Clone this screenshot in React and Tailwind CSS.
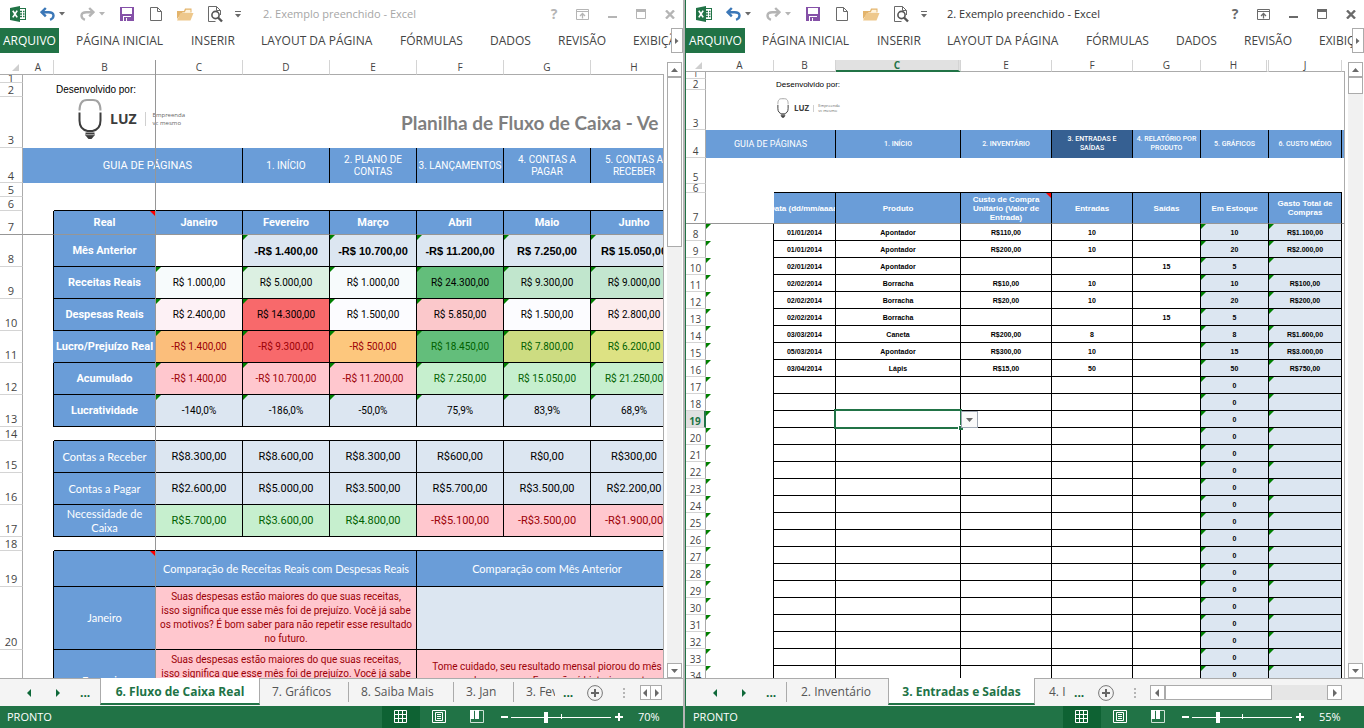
import React from "react";

const UI = "font-['Open_Sans','Noto_Sans',sans-serif]";
const BLUE = "bg-[#6a9dd8] text-white";
const ICE = "bg-[#dce6f1] text-black";
const PINK = "bg-[#ffc7ce] text-[#9c0006]";
const MINT = "bg-[#c6efce] text-[#006100]";

/* ---------- icons ---------- */

function ExcelIcon() {
  return (
    <svg width="17" height="16" viewBox="0 0 17 16" className="shrink-0" aria-hidden="true">
      <rect x="8.5" y="2.5" width="7" height="11" fill="#fff" stroke="#217346" />
      <path d="M10 5.5h2M13 5.5h1.5M10 8h2M13 8h1.5M10 10.5h2M13 10.5h1.5" stroke="#217346" strokeWidth="1.4" />
      <path d="M0 2l10-2v16l-10-2z" fill="#217346" />
      <path d="M2.8 4.8l4.4 6.6M7.2 4.6l-4.4 6.8" stroke="#fff" strokeWidth="1.7" />
    </svg>
  );
}

function UndoIcon({ flip }) {
  return (
    <svg width="15" height="14" viewBox="0 0 15 14" className={flip ? "shrink-0 -scale-x-100 text-[#b5b5b5]" : "shrink-0 text-[#3c78b8]"} aria-hidden="true">
      <path d="M1.5 5.2h7.2c6 0 6.200 5.600 1.400 7.600" fill="none" stroke="currentColor" strokeWidth="2.4" />
      <path d="M5.800 1L1.600 5.200l4.200 4.200" fill="none" stroke="currentColor" strokeWidth="2.4" />
    </svg>
  );
}

function Caret({ className }) {
  return (
    <svg width="6" height="4" viewBox="0 0 6 4" className={className} aria-hidden="true">
      <path d="M0 0h6l-3 3.4z" fill="currentColor" />
    </svg>
  );
}

function SaveIcon() {
  return (
    <svg width="14" height="14" viewBox="0 0 14 14" aria-hidden="true">
      <path d="M0 0h14v14h-14z" fill="#8551a8" />
      <path d="M2 1h10v6h-10zM3 9h8v5h-8z" fill="#fff" />
      <path d="M4 10h7v4h-4v-3h-1v3h-2z" fill="#8551a8" />
    </svg>
  );
}

function NewIcon() {
  return (
    <svg width="12" height="14" viewBox="0 0 12 14" aria-hidden="true">
      <path d="M.5.5h7l4 4v9h-11zM7.5.5v4h4" fill="#fff" stroke="#6a6a6a" />
    </svg>
  );
}

function OpenIcon() {
  return (
    <svg width="17" height="13" viewBox="0 0 17 13" aria-hidden="true">
      <path d="M0 11V3h7l1-2.500h6.500v4h-9z" fill="#e3b46c" />
      <path d="M9 1.700h4.500v3h-6z" fill="#fff3dc" />
      <path d="M0 12.500l3.500-7.500h13l-3 7.500z" fill="#eec88c" />
    </svg>
  );
}

function PreviewIcon() {
  return (
    <svg width="15" height="17" viewBox="0 0 15 17" aria-hidden="true">
      <path d="M12.500 9V4.500l-4-4h-8v15h7" fill="none" stroke="#6a6a6a" />
      <path d="M8.500.5v4h4" fill="none" stroke="#6a6a6a" />
      <circle cx="7.500" cy="9" r="3.600" fill="#fff" stroke="#555" strokeWidth="1.600" />
      <path d="M10 11.500l4 4" stroke="#555" strokeWidth="2.400" />
    </svg>
  );
}

function CustomizeIcon() {
  return (
    <svg width="6" height="7" viewBox="0 0 6 7" aria-hidden="true">
      <path d="M0 .5h6" stroke="#6a6a6a" />
      <path d="M0 3h6l-3 3.400z" fill="#6a6a6a" />
    </svg>
  );
}

function WindowIcons() {
  return (
    <>
      <button aria-label="Opções de exibição" className="w-[14px]">
        <svg width="14" height="11" viewBox="0 0 14 11" aria-hidden="true">
          <path d="M.5.5h12v10h-12zM.5 2.500h12" fill="none" stroke="currentColor" />
          <path d="M6.500 9.500v-5M4 7l2.500-2.500L9 7" fill="none" stroke="currentColor" strokeWidth="1.300" />
        </svg>
      </button>
      <button aria-label="Minimizar" className="w-[10px]">
        <svg width="10" height="11" viewBox="0 0 10 11" aria-hidden="true"><path d="M0 8h9" stroke="currentColor" strokeWidth="2" /></svg>
      </button>
      <button aria-label="Maximizar" className="w-[11px]">
        <svg width="11" height="10" viewBox="0 0 11 10" aria-hidden="true">
          <path d="M.5.5h9v9h-9z" fill="none" stroke="currentColor" /><path d="M0 1.500h10" stroke="currentColor" strokeWidth="3" />
        </svg>
      </button>
      <button aria-label="Fechar" className="w-[10px]">
        <svg width="10" height="9" viewBox="0 0 10 9" aria-hidden="true"><path d="M1 0.500l8 8M9 0.500l-8 8" stroke="currentColor" strokeWidth="2.400" /></svg>
      </button>
    </>
  );
}

function Bulb({ className }) {
  return (
    <svg viewBox="0 0 24 41" className={className} aria-hidden="true">
      <path d="M1.500 12C1.500 4 4.500 1.500 9 1.500h6c4.500 0 7.500 2.500 7.500 10.500" fill="none" stroke="#a3a3a3" strokeWidth="2" />
      <path d="M1.500 14v8c0 6 3.500 9.500 8 10.500h5c4.500-1 8-4.500 8-10.500v-8" fill="none" stroke="#3c3c3c" strokeWidth="2" />
      <path d="M7.500 34h9v3l-3 3.500h-3l-3-3.500z" fill="#3c3c3c" />
      <path d="M8 36.200h8" stroke="#fff" strokeWidth=".6" />
    </svg>
  );
}

/* ---------- window chrome ---------- */

const MENU = [
  ["PÁGINA INICIAL", "w-[115px]"],
  ["INSERIR", "w-[70px]"],
  ["LAYOUT DA PÁGINA", "w-[139px]"],
  ["FÓRMULAS", "w-[90px]"],
  ["DADOS", "w-[68px]"],
  ["REVISÃO", "w-[75px]"],
];

function TitleBar({ active }) {
  return (
    <header className={`flex h-7 shrink-0 items-center pl-[10px] ${UI}`}>
      <ExcelIcon />
      <button aria-label="Desfazer" className="ml-[13px]"><UndoIcon /></button>
      <Caret className="ml-1 shrink-0 text-[#6a6a6a]" />
      <button aria-label="Refazer" className="ml-[15px]"><UndoIcon flip /></button>
      <Caret className="ml-1 shrink-0 text-[#b5b5b5]" />
      <button aria-label="Salvar" className="ml-[15px]"><SaveIcon /></button>
      <button aria-label="Novo" className="ml-4"><NewIcon /></button>
      <button aria-label="Abrir" className="ml-[15px]"><OpenIcon /></button>
      <button aria-label="Visualizar impressão" className="ml-[14px]"><PreviewIcon /></button>
      <button aria-label="Personalizar" className="ml-3"><CustomizeIcon /></button>
      <h1 className={`flex-1 truncate text-[11px] leading-4 ${active ? "ml-5 text-[#333]" : "ml-[22px] text-[#a6a6a6]"}`}>2. Exemplo preenchido - Excel</h1>
      <div className={`flex shrink-0 items-center gap-[18px] pr-2 ${active ? "text-[#6a6a6a]" : "text-[#b5b5b5]"}`}>
        <button aria-label="Ajuda" className="w-[8px] text-[14px] leading-4 font-bold">?</button>
        <WindowIcons />
      </div>
    </header>
  );
}

function Ribbon() {
  return (
    <nav className={`mb-[7px] flex h-[25px] shrink-0 overflow-hidden text-[12px] leading-4 text-[#444] ${UI}`}>
      <button className="mr-[17px] w-[59px] shrink-0 bg-[#217346] text-white">ARQUIVO</button>
      {MENU.map(([label, width]) => (
        <button key={label} className={`shrink-0 text-left whitespace-nowrap ${width}`}>{label}</button>
      ))}
      <button className="min-w-0 flex-1 overflow-hidden text-left whitespace-nowrap">EXIBIÇÃO</button>
      <button aria-label="Mais guias" className="flex w-3 shrink-0 items-center justify-center border border-[#ababab]">
        <svg width="4" height="6" viewBox="0 0 4 6" aria-hidden="true"><path d="M0 0l3.500 3L0 6z" fill="#6a6a6a" /></svg>
      </button>
    </nav>
  );
}

function ArrowBox({ d, label, className }) {
  return (
    <button aria-label={label} className={`flex h-[15px] shrink-0 items-center justify-center border border-[#ababab] bg-white ${className}`}>
      <svg width="7" height="8" viewBox="0 0 7 8" aria-hidden="true"><path d={d} fill="#6a6a6a" /></svg>
    </button>
  );
}

function VScroll({ thumb }) {
  return (
    <div className="mr-px ml-[3px] flex w-[15px] shrink-0 flex-col bg-[#f1f1f1]">
      <div className="h-[2px] bg-white" />
      <ArrowBox d="M0 6h7L3.500 2z" label="Rolar para cima" className="w-[15px]" />
      <div className={`border border-[#ababab] bg-white ${thumb}`} />
      <div className="flex-1" />
      <ArrowBox d="M0 2h7L3.500 6z" label="Rolar para baixo" className="w-[15px]" />
    </div>
  );
}

function SheetNav({ className }) {
  return (
    <div className={`flex shrink-0 items-center pl-[27px] text-[#0e6839] ${className}`}>
      <button aria-label="Planilha anterior"><svg width="4" height="8" viewBox="0 0 4 8" aria-hidden="true"><path d="M4 0v8l-4-4z" fill="currentColor" /></svg></button>
      <button aria-label="Próxima planilha" className="ml-[25px]"><svg width="4" height="8" viewBox="0 0 4 8" aria-hidden="true"><path d="M0 0v8l4-4z" fill="currentColor" /></svg></button>
      <button aria-label="Mais planilhas" className="ml-5 font-bold">...</button>
    </div>
  );
}

function SheetTab({ label, className }) {
  return <button className={`my-[3px] h-5 shrink-0 overflow-hidden text-left whitespace-nowrap ${className}`}>{label}</button>;
}

function TabTail() {
  return (
    <>
      <span className="ml-2 shrink-0 self-center font-bold text-[#0e6839]">...</span>
      <button aria-label="Nova planilha" className="ml-[14px] shrink-0 self-center">
        <svg width="16" height="16" viewBox="0 0 16 16" aria-hidden="true">
          <circle cx="8" cy="8" r="7.400" fill="none" stroke="#777" />
          <path d="M8 4v8M4 8h8" stroke="#666" strokeWidth="2" />
        </svg>
      </button>
      <svg width="2" height="10" viewBox="0 0 2 10" className="ml-5 shrink-0 self-center" aria-hidden="true">
        <path d="M0 1h2M0 5h2M0 9h2" stroke="#b5b5b5" strokeWidth="2" />
      </svg>
    </>
  );
}

function StatusBar({ zoom, value }) {
  return (
    <footer className={`flex h-[22px] shrink-0 items-center bg-[#217346] pl-[7px] text-[11px] leading-4 text-white ${UI}`}>
      <span className="flex-1">PRONTO</span>
      <button aria-label="Normal" className="flex h-full w-[38px] items-center justify-center bg-[#0e6233]">
        <svg width="14" height="14" viewBox="0 0 14 14" aria-hidden="true"><path d="M.5.5h12v12h-12zM4.500.5v12M8.500.5v12M.5 4.500h12M.5 8.500h12" fill="none" stroke="#fff" /></svg>
      </button>
      <button aria-label="Layout da página" className="flex h-full w-[38px] items-center justify-center">
        <svg width="14" height="14" viewBox="0 0 14 14" aria-hidden="true"><path d="M.5.5h13v12h-13zM3.500 2.500h7v8h-7zM5 4.500h4M5 6.500h4M5 8.500h4" fill="none" stroke="#fff" /></svg>
      </button>
      <button aria-label="Quebra de página" className="flex h-full w-[38px] items-center justify-center">
        <svg width="14" height="14" viewBox="0 0 14 14" aria-hidden="true"><path d="M.5.5h13v12h-13z" fill="none" stroke="#cfe3d7" /><path d="M0 0h4v9H0zM5 0h4v9H5z" fill="#fff" /></svg>
      </button>
      <button aria-label="Reduzir" className="ml-[5px] flex h-full w-[7px] items-center"><span className="h-[2px] w-full bg-white" /></button>
      <label className="relative ml-[3px] flex h-full w-[100px] items-center">
        <span className="sr-only">Zoom</span>
        <span className="absolute top-2 left-1/2 h-[5px] w-px bg-white" />
        <input
          type="range"
          defaultValue={value}
          className="relative h-[11px] w-full appearance-none bg-transparent [&::-webkit-slider-runnable-track]:h-px [&::-webkit-slider-runnable-track]:bg-white [&::-webkit-slider-thumb]:-mt-[5px] [&::-webkit-slider-thumb]:h-[11px] [&::-webkit-slider-thumb]:w-[4px] [&::-webkit-slider-thumb]:appearance-none [&::-webkit-slider-thumb]:bg-white"
        />
      </label>
      <button aria-label="Ampliar" className="ml-1">
        <svg width="8" height="8" viewBox="0 0 8 8" aria-hidden="true"><path d="M4 0v8M0 4h8" stroke="#fff" strokeWidth="2" /></svg>
      </button>
      <span className="ml-[15px] w-[45px]">{zoom}</span>
    </footer>
  );
}

/* ---------- sheet parts ---------- */

function Flag() {
  return <span className="absolute top-0 left-0 size-[5px] bg-[#008000] [clip-path:polygon(0_0,100%_0,0_100%)]" />;
}

function Note() {
  return <span className="absolute top-0 right-0 size-[5px] bg-[#ff0000] [clip-path:polygon(0_0,100%_0,100%_100%)]" />;
}

function Cell({ children, flag, note, span, className = "" }) {
  return (
    <td colSpan={span} className={`relative border-r border-b border-black p-0 text-center ${className}`}>
      {flag && <Flag />}
      {note && <Note />}
      {children}
    </td>
  );
}

function RowHead({ n, height, inner = "", className = "border-r border-b border-r-[#ababab] border-b-[#d4d4d4] font-normal text-[#444]" }) {
  return (
    <th scope="row" className={`p-0 text-center align-bottom ${height} ${className} ${UI}`}>
      <div className={`overflow-hidden ${inner}`}>{n}</div>
    </th>
  );
}

function Corner() {
  return (
    <th className="border-b border-[#ababab] p-0 pr-1">
      <svg width="7" height="7" viewBox="0 0 7 7" className="ml-auto" aria-hidden="true"><path d="M7 0v7H0z" fill="#cfcfcf" /></svg>
    </th>
  );
}

/* ---------- left workbook ---------- */

const MONTHS = ["Janeiro", "Fevereiro", "Março", "Abril", "Maio", "Junho"];
const WHITE = "bg-[#fcfcff] text-black";

const REAL_ROWS = [
  { n: 9, label: "Receitas Reais", cells: [
    ["R$ 1.000,00", "bg-[#f7fbfc]"], ["R$ 5.000,00", "bg-[#dcf0e2]"], ["R$ 1.000,00", "bg-[#f7fbfc]"],
    ["R$ 24.300,00", "bg-[#63be7b]"], ["R$ 9.300,00", "bg-[#c1e6cd]"], ["R$ 9.000,00", "bg-[#c3e6cf]"]] },
  { n: 10, label: "Despesas Reais", cells: [
    ["R$ 2.400,00", "bg-[#fdf1f5]"], ["R$ 14.300,00", "bg-[#f8696b]"], ["R$ 1.500,00", WHITE],
    ["R$ 5.850,00", "bg-[#fbc8cb]"], ["R$ 1.500,00", WHITE], ["R$ 2.800,00", "bg-[#fceced]"]] },
  { n: 11, label: "Lucro/Prejuízo Real", cells: [
    ["-R$ 1.400,00", "bg-[#fbbe7b] text-[#9c0006]"], ["-R$ 9.300,00", "bg-[#f8696b] text-[#9c0006]"], ["-R$ 500,00", "bg-[#fdc77d] text-[#9c0006]"],
    ["R$ 18.450,00", "bg-[#63be7b] text-[#006100]"], ["R$ 7.800,00", "bg-[#cddc81] text-[#006100]"], ["R$ 6.200,00", "bg-[#dde283] text-[#006100]"]] },
  { n: 12, label: "Acumulado", cells: [
    ["-R$ 1.400,00", PINK], ["-R$ 10.700,00", PINK], ["-R$ 11.200,00", PINK],
    ["R$ 7.250,00", MINT], ["R$ 15.050,00", MINT], ["R$ 21.250,00", MINT]] },
  { n: 13, label: "Lucratividade", cells: [
    ["-140,0%", ICE], ["-186,0%", ICE], ["-50,0%", ICE], ["75,9%", ICE], ["83,9%", ICE], ["68,9%", ICE]] },
];

const BILL_ROWS = [
  { n: 15, label: "Contas a Receber", cells: [["R$8.300,00", ICE], ["R$8.600,00", ICE], ["R$8.300,00", ICE], ["R$600,00", ICE], ["R$0,00", ICE], ["R$300,00", ICE]] },
  { n: 16, label: "Contas a Pagar", cells: [["R$2.600,00", ICE], ["R$5.000,00", ICE], ["R$3.500,00", ICE], ["R$5.700,00", ICE], ["R$3.500,00", ICE], ["R$2.200,00", ICE]] },
  { n: 17, label: "Necessidade de Caixa", cells: [["R$5.700,00", MINT], ["R$3.600,00", MINT], ["R$4.800,00", MINT], ["-R$5.100,00", PINK], ["-R$3.500,00", PINK], ["-R$1.900,00", PINK]] },
];

const PROSE = "font-['Lato',sans-serif]";
const ADVICE = `font-['Roboto',sans-serif] text-[10px] whitespace-nowrap ${PINK}`;

function LossText() {
  return (
    <>
      Suas despesas estão maiores do que suas receitas,<br />
      isso significa que esse mês foi de prejuízo. Você já sabe<br />
      os motivos? É bom saber para não repetir esse resultado<br />
      no futuro.
    </>
  );
}

function CashFlowSheet() {
  return (
    <div className="relative min-w-0 flex-1 overflow-hidden font-['Roboto',sans-serif]">
      <table className="w-[678px] table-fixed border-separate border-spacing-0 text-[11px] leading-[14px]">
        <colgroup>
          <col className="w-[23px]" /><col className="w-[31px]" /><col className="w-[102px]" />
          {MONTHS.map((m) => <col key={m} className="w-[87px]" />)}
        </colgroup>
        <thead>
          <tr className="h-[15px]">
            <Corner />
            {["A", "B", "C", "D", "E", "F", "G", "H"].map((c) => (
              <th key={c} scope="col" className={`border-r border-b border-r-[#d4d4d4] border-b-[#ababab] p-0 text-[10px] font-normal text-[#444] ${UI}`}>{c}</th>
            ))}
          </tr>
        </thead>
        <tbody>
          <tr><RowHead n={1} height="h-[8px]" inner="flex h-[7px] items-end justify-center leading-[9px]" /><td colSpan={8} /></tr>
          <tr>
            <RowHead n={2} height="h-[14px]" inner="leading-[12px]" />
            <td />
            <td colSpan={2} className="p-0 pl-[2px] font-['Liberation_Sans',Arial,sans-serif] text-[10px] leading-[12px]">Desenvolvido por:</td>
            <td colSpan={5} />
          </tr>
          <tr>
            <RowHead n={3} height="h-[51px]" />
            <td colSpan={8} className="p-0 pl-[378px] font-['Lato',sans-serif] text-[19px] leading-6 font-bold whitespace-nowrap text-[#7f7f7f]">
              Planilha de Fluxo de Caixa - Ve
            </td>
          </tr>
          <tr className="leading-[12px]">
            <RowHead n={4} height="h-[35px]" />
            <td colSpan={3} className={`border-r border-black p-0 pl-[30px] text-center ${BLUE}`}>GUIA DE PÁGINAS</td>
            {["1. INÍCIO", "2. PLANO DE CONTAS", "3. LANÇAMENTOS", "4. CONTAS A PAGAR", "5. CONTAS A RECEBER"].map((t) => (
              <td key={t} className={`border-r border-black p-0 px-px text-center text-[10px] ${BLUE}`}>{t}</td>
            ))}
          </tr>
          <tr><RowHead n={5} height="h-[14px]" inner="leading-[12px]" /><td colSpan={8} /></tr>
          <tr><RowHead n={6} height="h-[14px]" inner="leading-[12px]" /><td /><td colSpan={7} className="border-b border-black" /></tr>
          <tr className="font-bold">
            <RowHead n={7} height="h-[24px]" className="border-r border-b border-r-[#ababab] border-b-[#969696] font-normal text-[#444]" />
            <td className="border-r border-b border-r-black border-b-[#969696]" />
            <Cell note className={`border-b-[#969696] ${BLUE}`}>Real</Cell>
            {MONTHS.map((m) => <Cell key={m} className={`border-b-[#969696] ${BLUE}`}>{m}</Cell>)}
          </tr>
          <tr className="font-bold">
            <RowHead n={8} height="h-[32px]" />
            <td className="border-r border-black" />
            <Cell className={BLUE}>Mês Anterior</Cell>
            <Cell />
            {["-R$ 1.400,00", "-R$ 10.700,00", "-R$ 11.200,00", "R$ 7.250,00", "R$ 15.050,00"].map((v) => (
              <Cell key={v} flag className={`font-['Liberation_Sans',Arial,sans-serif] ${ICE}`}>{v}</Cell>
            ))}
          </tr>
          {REAL_ROWS.map((r) => (
            <tr key={r.n}>
              <RowHead n={r.n} height="h-[32px]" />
              <td className={`border-r ${r.n === 11 ? "border-[#6a9dd8]" : "border-black"}`} />
              <Cell className={`font-bold whitespace-nowrap ${BLUE}`}>{r.label}</Cell>
              {r.cells.map(([v, c], i) => <Cell key={i} flag className={`text-[10px] ${c}`}>{v}</Cell>)}
            </tr>
          ))}
          <tr><RowHead n={14} height="h-[14px]" inner="leading-[12px]" /><td /><td colSpan={7} className="border-b border-black" /></tr>
          {BILL_ROWS.map((r) => (
            <tr key={r.n}>
              <RowHead n={r.n} height="h-[32px]" />
              <td className="border-r border-black" />
              <Cell className={`${PROSE} ${BLUE}`}>{r.label}</Cell>
              {r.cells.map(([v, c], i) => <Cell key={i} className={c}>{v}</Cell>)}
            </tr>
          ))}
          <tr><RowHead n={18} height="h-[14px]" inner="leading-[12px]" /><td /><td colSpan={7} className="border-b border-black" /></tr>
          <tr className={PROSE}>
            <RowHead n={19} height="h-[36px]" />
            <td className="border-r border-black" />
            <Cell note className={BLUE} />
            <Cell span={3} className={BLUE}>Comparação de Receitas Reais com Despesas Reais</Cell>
            <Cell span={3} className={BLUE}>Comparação com Mês Anterior</Cell>
          </tr>
          <tr className={PROSE}>
            <RowHead n={20} height="h-[63px]" />
            <td className="border-r border-black" />
            <Cell className={BLUE}>Janeiro</Cell>
            <Cell span={3} className={ADVICE}><LossText /></Cell>
            <Cell span={3} className={ICE} />
          </tr>
          <tr className={PROSE}>
            <RowHead n={21} height="h-[63px]" />
            <td className="border-r border-black" />
            <Cell className={BLUE}>Fevereiro</Cell>
            <Cell span={3} className={ADVICE}><LossText /></Cell>
            <Cell span={3} className={ADVICE}>
              Tome cuidado, seu resultado mensal piorou do mês<br />
              passado para esse. Essa não é historicamente<br />
              uma tendência positiva.
            </Cell>
          </tr>
        </tbody>
      </table>
      <div className="absolute top-[38px] left-[78px] flex items-center">
        <Bulb className="h-[42px] w-[24px]" />
        <span className={`ml-2 text-[14px] leading-5 font-bold text-[#3c3c3c] ${UI}`}>LUZ</span>
        <span className="ml-2 h-[14px] w-px bg-[#d0d0d0]" />
        <span className={`ml-[7px] text-[6px] leading-[8px] font-medium text-[#666] ${UI}`}>Empreenda<br />vc mesmo</span>
      </div>
      <div className="absolute top-0 bottom-0 left-[155px] w-px bg-[#969696]" />
      <div className="absolute top-[14px] right-0 bottom-0 w-px bg-[#ababab]" />
    </div>
  );
}

/* ---------- right workbook ---------- */

const STOCK = [
  ["01/01/2014", "Apontador", "R$110,00", "10", "", "10", "R$1.100,00"],
  ["01/01/2014", "Apontador", "R$200,00", "10", "", "20", "R$2.000,00"],
  ["02/01/2014", "Apontador", "", "", "15", "5", ""],
  ["02/02/2014", "Borracha", "R$10,00", "10", "", "10", "R$100,00"],
  ["02/02/2014", "Borracha", "R$20,00", "10", "", "20", "R$200,00"],
  ["02/02/2014", "Borracha", "", "", "15", "5", ""],
  ["03/03/2014", "Caneta", "R$200,00", "8", "", "8", "R$1.600,00"],
  ["05/03/2014", "Apontador", "R$300,00", "10", "", "15", "R$3.000,00"],
  ["03/04/2014", "Lápis", "R$15,00", "50", "", "50", "R$750,00"],
  ...Array.from({ length: 18 }, () => ["", "", "", "", "", "0", ""]),
];

const STOCK_NAV = ["1. INÍCIO", "2. INVENTÁRIO", "3. ENTRADAS E SAÍDAS", "4. RELATÓRIO POR PRODUTO", "5. GRÁFICOS", "6. CUSTO MÉDIO"];
const STOCK_HEAD = ["Produto", "Custo de Compra Unitário (Valor de Entrada)", "Entradas", "Saídas", "Em Estoque", "Gasto Total de Compras"];
const HEAD_ON = "border-r-2 border-b border-r-[#217346] border-b-[#d4d4d4] bg-[#e1e1e1] font-bold text-[#217346]";

function Selection() {
  return (
    <>
      <span className="absolute -top-[2px] -right-[2px] -bottom-[2px] -left-[2px] z-10 border-2 border-[#217346]" />
      <span className="absolute -right-[3px] -bottom-[3px] z-10 size-[5px] border-t border-l border-white bg-[#217346]" />
      <button aria-label="Abrir lista" className="absolute top-0 left-full z-20 ml-px flex h-[17px] w-[17px] items-center justify-center border border-[#a0a8b4] bg-[#fafafa]">
        <svg width="7" height="4" viewBox="0 0 7 4" aria-hidden="true"><path d="M0 0h7L3.500 4z" fill="#6a6a6a" /></svg>
      </button>
    </>
  );
}

function StockSheet() {
  return (
    <div className="relative min-w-0 flex-1 overflow-hidden font-['Liberation_Sans',Arial,sans-serif]">
      <table className="w-[696px] table-fixed border-separate border-spacing-0 text-[10px] leading-[12px]">
        <colgroup>
          <col className="w-[20px]" /><col className="w-[68px]" /><col className="w-[62px]" /><col className="w-[125px]" /><col className="w-[91px]" />
          <col className="w-[81px]" /><col className="w-[68px]" /><col className="w-[68px]" /><col className="w-[73px]" /><col className="w-[40px]" />
        </colgroup>
        <thead>
          <tr className="h-[12px] leading-[9px]">
            <Corner />
            {["A", "B", "C", "E", "F", "G", "H", "J", ""].map((c, i) => (
              <th
                key={i}
                scope="col"
                className={`p-0 text-[10px] ${UI} ${
                  c === "C"
                    ? "border-r-[3px] border-b-2 border-double border-r-[#d4d4d4] border-b-[#217346] bg-[#e1e1e1] font-bold text-[#217346] [border-bottom-style:solid]"
                    : c === "H"
                      ? "border-r-[3px] border-b border-double border-r-[#d4d4d4] border-b-[#ababab] font-normal text-[#444] [border-bottom-style:solid]"
                      : "border-r border-b border-r-[#d4d4d4] border-b-[#ababab] font-normal text-[#444]"
                }`}
              >
                {c}
              </th>
            ))}
          </tr>
        </thead>
        <tbody>
          <tr><RowHead n={1} height="h-[7px]" inner="flex h-[6px] items-end justify-center text-[9px] leading-[8px]" /><td colSpan={9} /></tr>
          <tr>
            <RowHead n={2} height="h-[11px]" inner="h-[10px] leading-[10px]" />
            <td />
            <td colSpan={2} className="p-0 pl-[2px] text-[8px] leading-[10px]">Desenvolvido por:</td>
            <td colSpan={6} />
          </tr>
          <tr><RowHead n={3} height="h-[40px]" inner="leading-[11px]" /><td colSpan={9} /></tr>
          <tr className="font-['Roboto',sans-serif] text-[7px] leading-[9px] font-medium">
            <RowHead n={4} height="h-[28px]" inner="text-[10px] leading-[11px]" />
            <td colSpan={2} className={`border-r border-black p-0 text-center text-[9px] font-normal ${BLUE}`}>GUIA DE PÁGINAS</td>
            {STOCK_NAV.map((t) => (
              <td key={t} className={`border-r border-black p-0 text-center text-white ${t.startsWith("3") ? "bg-[#366092] px-2" : "bg-[#6a9dd8]"}`}>{t}</td>
            ))}
            <td className="bg-[#6a9dd8]" />
          </tr>
          <tr><RowHead n={5} height="h-[26px]" inner="leading-[11px]" /><td colSpan={9} /></tr>
          <tr><RowHead n={6} height="h-[9px]" inner="h-[8px] leading-[9px]" /><td /><td colSpan={7} className="border-b border-black" /><td /></tr>
          <tr className="text-[8px] leading-[9px] font-bold">
            <RowHead n={7} height="h-[31px]" inner="text-[10px] leading-[11px]" className="border-r border-b border-r-[#ababab] border-b-[#969696] font-normal text-[#444]" />
            <td className="border-b border-[#969696]" />
            <Cell className={`border-b-[#969696] ${BLUE}`}>
              <div className="flex justify-center overflow-hidden whitespace-nowrap"><span className="shrink-0">Data (dd/mm/aaaa)</span></div>
            </Cell>
            {STOCK_HEAD.map((t, i) => <Cell key={t} note={i === 1} className={`border-b-[#969696] ${BLUE}`}>{t}</Cell>)}
            <td className="border-b border-[#969696]" />
          </tr>
          {STOCK.map((row, i) => {
            const n = i + 8;
            return (
              <tr key={n} className="text-[7px] leading-[10px] font-bold">
                <RowHead n={n} height="h-[17px]" inner="text-[10px] leading-[12px]" className={n === 19 ? HEAD_ON : undefined} />
                <td className="relative border-r border-black p-0"><Flag /></td>
                {row.map((v, c) => (
                  <Cell key={c} flag={c > 4} className={`pt-px ${c > 4 ? ICE : ""}`}>
                    {n === 19 && c === 1 ? <Selection /> : v}
                  </Cell>
                ))}
                <td />
              </tr>
            );
          })}
        </tbody>
      </table>
      <div className="absolute top-[38px] left-[90px] flex items-center">
        <Bulb className="h-[20px] w-[14px]" />
        <span className={`ml-1 text-[8px] leading-3 font-bold text-[#3c3c3c] ${UI}`}>LUZ</span>
        <span className="ml-1 h-[7px] w-px bg-[#d0d0d0]" />
        <span className={`ml-1 text-[4px] leading-[5px] text-[#666] ${UI}`}>Empreenda<br />vc mesmo</span>
      </div>
      <div className="absolute top-[11px] right-0 bottom-0 w-px bg-[#ababab]" />
    </div>
  );
}

/* ---------- page ---------- */

const TABBAR = `flex h-[28px] shrink-0 border-t border-[#ababab] bg-[#f4f4f4] text-[12px] leading-5 text-[#555] ${UI}`;
const TAB_ON = "-mt-px h-[27px] shrink-0 border-x border-b-2 border-x-[#ababab] border-b-[#217346] bg-white pt-[2px] text-center font-bold whitespace-nowrap text-[#217346]";

export default function App() {
  return (
    <main className="grid h-screen grid-cols-[685fr_679fr] grid-rows-[100%] overflow-hidden bg-white">
      <section className="flex min-h-0 min-w-0 flex-col border-r-2 border-[#b4b4b4]">
        <TitleBar />
        <Ribbon />
        <div className="flex min-h-0 flex-1 overflow-hidden">
          <CashFlowSheet />
          <VScroll thumb="h-[170px]" />
        </div>
        <div className={TABBAR}>
          <SheetNav className="w-[100px]" />
          <button className={`w-[160px] ${TAB_ON}`}>6. Fluxo de Caixa Real</button>
          <SheetTab label="7. Gráficos" className="w-[89px] border-r border-[#ababab] pl-3" />
          <SheetTab label="8. Saiba Mais" className="w-[105px] border-r border-[#ababab] pl-3" />
          <SheetTab label="3. Jan" className="w-[60px] border-r border-[#ababab] pl-3" />
          <SheetTab label="3. Fev" className="w-[41px] pl-3" />
          <TabTail />
          <div className="ml-auto flex items-center pr-[21px]">
            <ArrowBox d="M5 0v8L1 4z" label="Rolar para a esquerda" className="w-[11px]" />
            <ArrowBox d="M2 0v8l4-4z" label="Rolar para a direita" className="w-[11px] border-l-0" />
          </div>
        </div>
        <StatusBar zoom="70%" value={34} />
      </section>
      <section className="flex min-h-0 min-w-0 flex-col border-l border-[#217346]">
        <TitleBar active />
        <Ribbon />
        <div className="flex min-h-0 flex-1 overflow-hidden">
          <StockSheet />
          <VScroll thumb="h-[17px]" />
        </div>
        <div className={TABBAR}>
          <SheetNav className="w-[100px]" />
          <SheetTab label="2. Inventário" className="w-[102px] border-l border-[#ababab] pl-[14px]" />
          <button className={`w-[147px] ${TAB_ON}`}>3. Entradas e Saídas</button>
          <SheetTab label="4. Inventário" className="w-[31px] pl-[14px]" />
          <TabTail />
          <div className="mr-[22px] ml-[14px] flex min-w-0 flex-1 items-center">
            <ArrowBox d="M5 0v8L1 4z" label="Rolar para a esquerda" className="w-[15px]" />
            <div className="flex h-[15px] flex-1 bg-[#e6e6e6]"><span className="w-[107px] border border-[#ababab] bg-white" /></div>
            <ArrowBox d="M2 0v8l4-4z" label="Rolar para a direita" className="w-[15px]" />
          </div>
        </div>
        <StatusBar zoom="55%" value={25} />
      </section>
    </main>
  );
}
